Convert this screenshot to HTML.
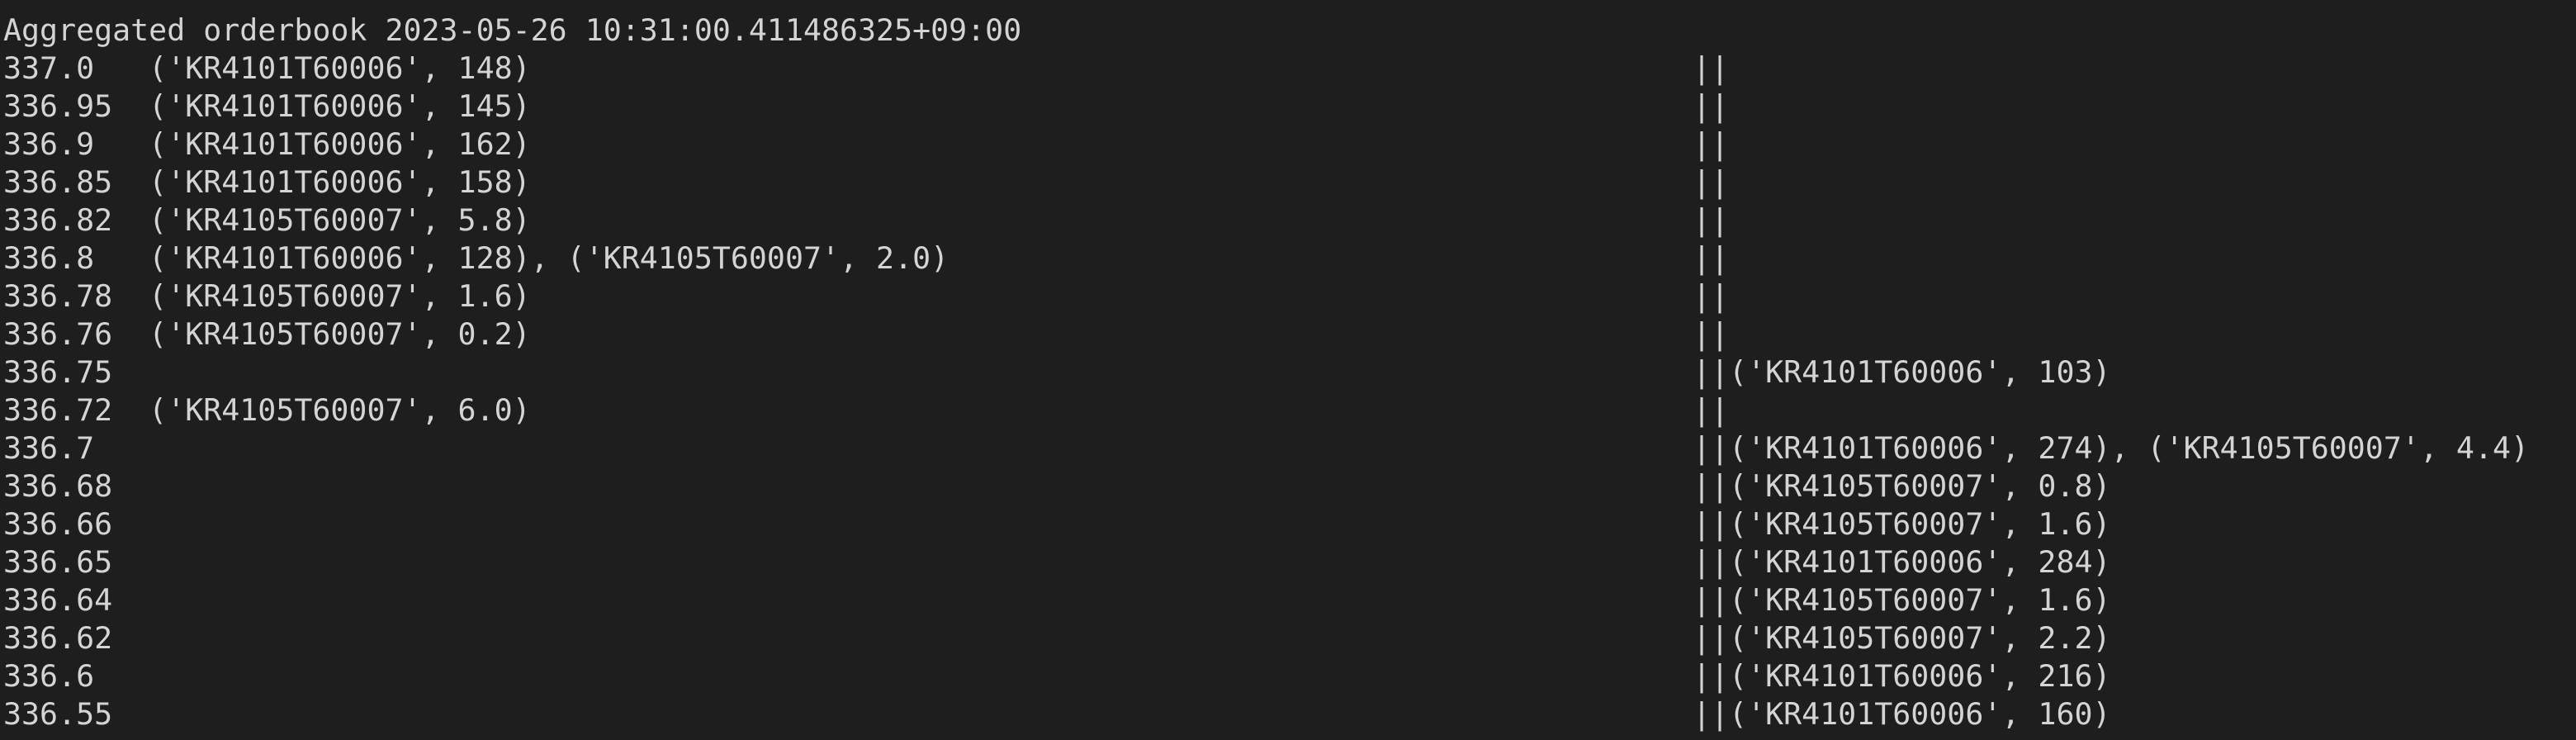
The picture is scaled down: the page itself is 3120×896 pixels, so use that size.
<!DOCTYPE html>
<html><head><meta charset="utf-8"><style>
html,body{margin:0;padding:0;background:#1e1e1e;width:3120px;height:896px;overflow:hidden;position:relative}
pre{margin:0;position:absolute;top:14px;font-family:"DejaVu Sans Mono","Liberation Mono",monospace;font-size:36.6px;line-height:46px;color:#d4d4d4;white-space:pre}
#l{left:4px}
#r{left:2050px;top:60px}
</style></head><body><pre id="l">Aggregated orderbook 2023-05-26 10:31:00.411486325+09:00
337.0   ('KR4101T60006', 148)
336.95  ('KR4101T60006', 145)
336.9   ('KR4101T60006', 162)
336.85  ('KR4101T60006', 158)
336.82  ('KR4105T60007', 5.8)
336.8   ('KR4101T60006', 128), ('KR4105T60007', 2.0)
336.78  ('KR4105T60007', 1.6)
336.76  ('KR4105T60007', 0.2)
336.75
336.72  ('KR4105T60007', 6.0)
336.7
336.68
336.66
336.65
336.64
336.62
336.6
336.55
</pre><pre id="r">||
||
||
||
||
||
||
||
||('KR4101T60006', 103)
||
||('KR4101T60006', 274), ('KR4105T60007', 4.4)
||('KR4105T60007', 0.8)
||('KR4105T60007', 1.6)
||('KR4101T60006', 284)
||('KR4105T60007', 1.6)
||('KR4105T60007', 2.2)
||('KR4101T60006', 216)
||('KR4101T60006', 160)
</pre></body></html>
